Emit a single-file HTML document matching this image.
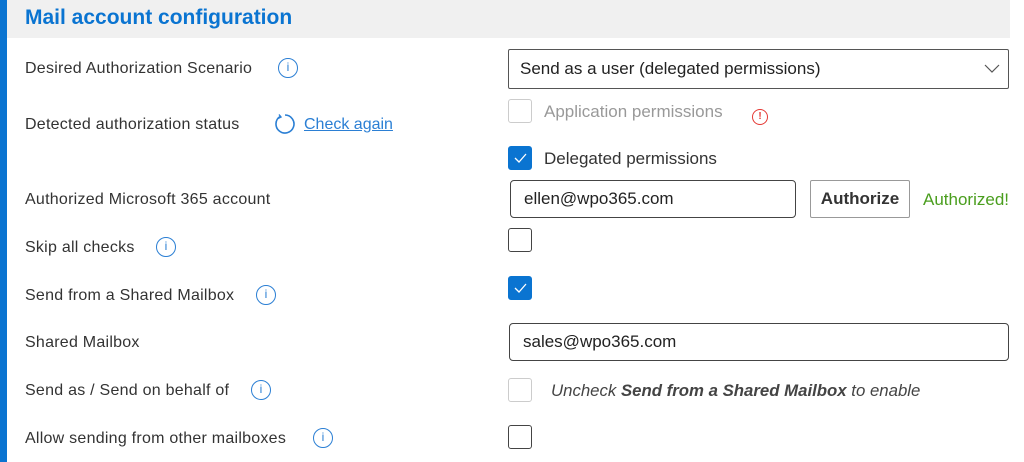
<!DOCTYPE html><html><head><style>
body{margin:0;width:1024px;height:462px;background:#fff;font-family:"Liberation Sans",sans-serif;position:relative;overflow:hidden;color:#333}
.a{position:absolute;white-space:nowrap}
.bar{left:0;top:0;width:7px;height:462px;background:#0a74d1}
.hd{left:7px;top:0;width:1003px;height:38px;background:#f0f0f0}
.t{left:25px;top:6px;font-size:21px;font-weight:bold;color:#0a74d1}
.l{left:25px;font-size:16px;color:#333;line-height:18px;letter-spacing:0.25px}
.cb{left:508px;box-sizing:border-box;width:24px;height:24px;border:1px solid #444;border-radius:3px}
.cb.dis{border-color:#ccc}
.cb.on{background:#0a74d1;border-color:#0a74d1}
.inp{border:1px solid #444;border-radius:4px;box-sizing:border-box;font-size:17px;padding-left:13px;line-height:36px;color:#222}
.i{width:20px;height:20px;border:1.5px solid #2b7fd4;border-radius:50%;box-sizing:border-box;color:#2b7fd4;font-size:12px;text-align:center;line-height:17px}
</style></head><body>
<div class="a bar"></div><div class="a hd"></div>
<div class="a t">Mail account configuration</div>
<div class="a l" style="top:60px">Desired Authorization Scenario</div>
<div class="a i" style="left:278px;top:58px">i</div>
<div class="a l" style="top:116px">Detected authorization status</div>
<svg class="a" style="left:273px;top:113px" width="22" height="22" viewBox="0 0 22 22"><path d="M7 3.5A9 9 0 1 0 12 2" fill="none" stroke="#2b7fd4" stroke-width="1.6"/><path d="M6 1.5L8 4 5 5.5" fill="none" stroke="#2b7fd4" stroke-width="1.4"/></svg>
<div class="a" style="left:304px;top:116px;font-size:16px;color:#2b7fd4;text-decoration:underline">Check again</div>
<div class="a l" style="top:191px">Authorized Microsoft 365 account</div>
<div class="a l" style="top:239px">Skip all checks</div>
<div class="a i" style="left:156px;top:237px">i</div>
<div class="a l" style="top:287px">Send from a Shared Mailbox</div>
<div class="a i" style="left:256px;top:285px">i</div>
<div class="a l" style="top:334px">Shared Mailbox</div>
<div class="a l" style="top:382px">Send as / Send on behalf of</div>
<div class="a i" style="left:251px;top:380px">i</div>
<div class="a l" style="top:430px">Allow sending from other mailboxes</div>
<div class="a i" style="left:313px;top:428px">i</div>

<div class="a inp" style="left:508px;top:49px;width:501px;height:40px;border-color:#555;line-height:38px;padding-left:11px;border-radius:2px">Send as a user (delegated permissions)</div>
<svg class="a" style="left:984px;top:62px" width="16" height="12"><path d="M1 3l7 7 7-7" fill="none" stroke="#555" stroke-width="1.2"/></svg>
<div class="a cb dis" style="top:99px"></div>
<div class="a" style="left:544px;top:102px;font-size:17px;color:#999">Application permissions</div>
<div class="a" style="left:752px;top:109px;width:16px;height:16px;border:1.3px solid #e53935;border-radius:50%;box-sizing:border-box;color:#e53935;font-size:10px;text-align:center;line-height:14px;font-weight:bold">!</div>
<div class="a cb on" style="top:146px"><svg width="22" height="22"><path d="M6 11l4 4 7-8" fill="none" stroke="#fff" stroke-width="1.3"/></svg></div>
<div class="a" style="left:544px;top:149px;font-size:17px;color:#333">Delegated permissions</div>
<div class="a inp" style="left:510px;top:180px;width:286px;height:38px">ellen@wpo365.com</div>
<div class="a" style="left:810px;top:180px;width:100px;height:38px;border:1px solid #999;border-radius:2px;box-sizing:border-box;text-align:center;line-height:36px;font-size:17px;font-weight:bold;color:#333">Authorize</div>
<div class="a" style="left:923px;top:190px;font-size:17px;color:#4a9e1e">Authorized!</div>
<div class="a cb" style="top:228px"></div>
<div class="a cb on" style="top:276px"><svg width="22" height="22"><path d="M6 11l4 4 7-8" fill="none" stroke="#fff" stroke-width="1.3"/></svg></div>
<div class="a inp" style="left:509px;top:323px;width:500px;height:38px">sales@wpo365.com</div>
<div class="a cb dis" style="top:378px"></div>
<div class="a" style="left:551px;top:381px;font-size:16.8px;font-style:italic;color:#444">Uncheck <b>Send from a Shared Mailbox</b> to enable</div>
<div class="a cb" style="top:425px"></div>
</body></html>
